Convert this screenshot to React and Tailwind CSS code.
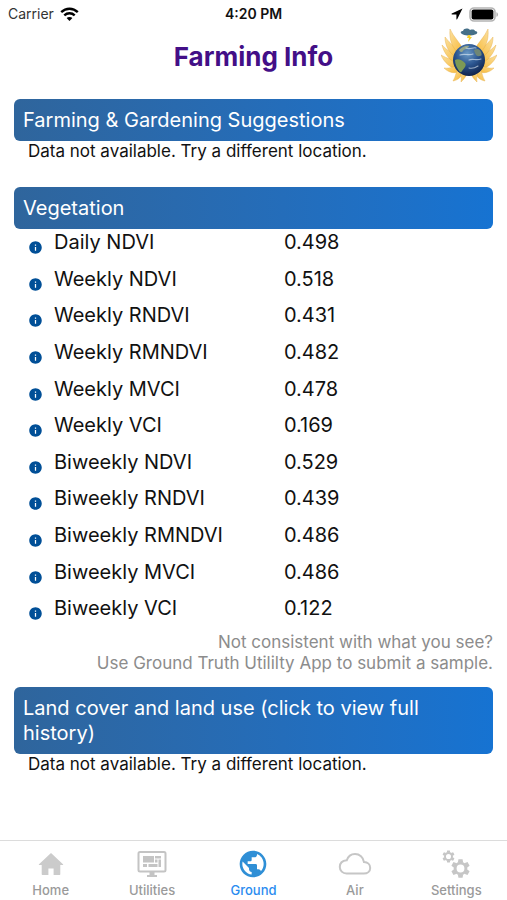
import React from 'react';
import { MdInfo, MdPublic } from 'react-icons/md';

const vegetation = [
    { name: 'Daily NDVI', value: '0.498' },
    { name: 'Weekly NDVI', value: '0.518' },
    { name: 'Weekly RNDVI', value: '0.431' },
    { name: 'Weekly RMNDVI', value: '0.482' },
    { name: 'Weekly MVCI', value: '0.478' },
    { name: 'Weekly VCI', value: '0.169' },
    { name: 'Biweekly NDVI', value: '0.529' },
    { name: 'Biweekly RNDVI', value: '0.439' },
    { name: 'Biweekly RMNDVI', value: '0.486' },
    { name: 'Biweekly MVCI', value: '0.486' },
    { name: 'Biweekly VCI', value: '0.122' },
];

const WifiIcon = () => (
    <svg width="19" height="14" viewBox="0 0 19 14" fill="none" stroke="#000" strokeWidth="2.4">
        <path d="M1.2 5.2C6 .6 13 .6 17.8 5.2" />
        <path d="M4.3 8.3c3-2.8 7.4-2.8 10.4 0" />
        <path d="M9.5 14l-2.9-3c1.6-1.5 4.2-1.5 5.8 0z" fill="#000" stroke="none" />
    </svg>
);

const LocationIcon = () => (
    <svg width="12" height="12" viewBox="0 0 12 12">
        <path d="M11.5.5L.8 5.6c-.5.3-.4.9.2.9h4.4v4.4c0 .6.7.7.9.2z" fill="#000" />
    </svg>
);

const BatteryIcon = () => (
    <svg width="30" height="15" viewBox="0 0 30 15">
        <rect x="1" y="1" width="25" height="13" rx="4" fill="#fff" stroke="#b4b4b4" strokeWidth="1.6" />
        <rect x="2.6" y="2.6" width="21.8" height="9.8" rx="2" fill="#000" />
        <path d="M27.4 5.2c2.2.6 2.2 4 0 4.600z" fill="#b4b4b4" />
    </svg>
);

const Wing = () => (
    <g fill="url(#feather)" stroke="#e3a93c" strokeWidth=".4">
        <path d="M20 42C9 41 3 34 0 27c6 4 13 4 21 8z" />
        <path d="M19 37C8 33 3 25 1 17c5 6 12 8 19 14z" />
        <path d="M19 32C8 26 4 18 4 9c5 7 12 11 17 18z" />
        <path d="M20 28C11 20 8 12 9 1c4 9 10 13 14 22z" />
        <path d="M20 43c-6 3-12 2-17-3 7 1 10-2 15-3z" />
        <path d="M23 42c-2 7-6 10-11 11 3-5 3-9 5-14z" />
        <path d="M26 43c0 5-3 8-6 11 1-5-1-8 0-13z" />
    </g>
);

const Logo = () => (
    <svg width="56" height="54" viewBox="0 0 56 54" role="img" aria-label="Winged globe">
        <defs>
            <linearGradient id="feather" x1="0" y1="0" x2="1" y2="1">
                <stop offset="0" stopColor="#fbe0a0" />
                <stop offset="1" stopColor="#f7b52c" />
            </linearGradient>
            <radialGradient id="ocean" cx=".45" cy=".3" r=".72">
                <stop offset="0" stopColor="#6b9ac6" />
                <stop offset=".5" stopColor="#2b5590" />
                <stop offset="1" stopColor="#0f2148" />
            </radialGradient>
        </defs>
        <Wing />
        <g transform="translate(56 0) scale(-1 1)">
            <Wing />
        </g>
        <circle cx="28" cy="32" r="16" fill="url(#ocean)" />
        <path d="M14 32c3-2 7 0 10 3 2 3-1 5-3 8-1 2-2 1-3 0-2-3-4-7-4-11z" fill="#7d9a55" />
        <path d="M18 22c3-3 7-5 10-4-1 3-5 3-6 5-1 2-3 1-4-1z" fill="#95a58a" />
        <path d="M33 22c3-2 6-1 7 2 1 3 1 4-2 4-2 1-4-2-5-6z" fill="#6f8675" />
        <path d="M19 27c5-2 8 1 13-1M25 20c4 2 7-1 10 0M28 32c4-2 7 1 12-1M28 40c4 1 6 0 9-2" fill="none" stroke="#dce8f2" strokeWidth="1.1" strokeLinecap="round" opacity=".65" />
        <path d="M22 6.5c-3-1-3-3.5 0-3.5 1-3 5-3 7-1 3-1 5 0 5 1 3 0 3 3 0 3.5-3 1.500-9 1.500-12 0z" fill="#456f88" />
        <path d="M27 7h3l-1 2h2l-4 5 1-4h-2z" fill="#f7cf2e" />
    </svg>
);

const HomeIcon = () => (
    <svg width="26" height="24" viewBox="0 0 26 24" fill="#cbcbcb">
        <path d="M13 1l12 11.200c.4.400.2.800-.3.800H22.300v9.300c0 .5-.3.700-.7.700h-6v-6.500h-5.200V23h-6c-.4 0-.7-.2-.7-.7V13H1.300c-.5 0-.7-.4-.3-.8z" />
    </svg>
);

const UtilitiesIcon = () => (
    <svg width="30" height="28" viewBox="0 0 30 28" fill="#c4c4c4">
        <rect x="1.5" y="2" width="27" height="19.5" rx="1.5" fill="none" stroke="#c4c4c4" strokeWidth="2" />
        <path d="M12.5 22h5v3H20v2H10v-2h2.5z" />
        <rect x="6" y="6" width="11" height="6.5" />
        <rect x="18" y="6" width="6" height="2.5" />
        <rect x="18" y="9.5" width="2.5" height="3" />
        <rect x="21.5" y="9.5" width="2.5" height="7.5" />
        <rect x="6" y="14" width="4" height="3" />
        <rect x="11.5" y="14" width="9" height="3" />
    </svg>
);

const CloudIcon = () => (
    <svg width="34" height="24" viewBox="0 0 34 24" fill="none" stroke="#c6c6c6" strokeWidth="2">
        <path d="M8.5 21.5h17.3c3.7 0 6.4-2.4 6.4-5.6 0-3.4-2.6-5.6-6.2-5.8C25.4 5 21.5 2 17 2c-4 0-7 2.5-8.2 6.3C4.7 8.7 1.8 11.2 1.8 14.9c0 3.8 2.9 6.6 6.7 6.6z" />
    </svg>
);

const Gear = ({ cx, cy, scale }) => (
    <g transform={`translate(${cx} ${cy}) scale(${scale})`}>
        <circle r="5.5" fill="none" stroke="#c6c6c6" strokeWidth="3" />
        {[0, 60, 120, 180, 240, 300].map((angle) => (
            <path key={angle} d="M-2.7-6L-2.1-9.5h4.2L2.7-6z" transform={`rotate(${angle})`} fill="#c6c6c6" />
        ))}
    </g>
);

const SettingsIcon = () => (
    <svg width="28" height="28" viewBox="0 0 28 28">
        <Gear cx={6.5} cy={6.5} scale={0.64} />
        <Gear cx={18.5} cy={18.5} scale={0.98} />
    </svg>
);

const tabs = [
    { label: 'Home', icon: <HomeIcon /> },
    { label: 'Utilities', icon: <UtilitiesIcon /> },
    { label: 'Ground', icon: <MdPublic size={32} color="#2f8fd6" />, active: true },
    { label: 'Air', icon: <CloudIcon /> },
    { label: 'Settings', icon: <SettingsIcon /> },
];

const bar = 'w-full rounded-md bg-linear-to-r from-[#2f659c] to-[#1673d2] px-[9px] pt-[9px] pb-2 text-left text-xl leading-[25px] text-white';

const StatusBar = () => (
    <div className="grid h-7 grid-cols-3 items-center px-2 text-sm">
        <div className="flex items-center gap-[6px] text-[#333]">
            Carrier
            <WifiIcon />
        </div>
        <div className="text-center font-semibold">4:20 PM</div>
        <div className="flex items-center justify-end gap-[6px]">
            <LocationIcon />
            <BatteryIcon />
        </div>
    </div>
);

const Header = () => (
    <header className="relative flex h-14 items-center justify-center">
        <h1 className="text-[26px] font-bold text-[#430f87]">Farming Info</h1>
        <div className="absolute top-0 right-[10px]">
            <Logo />
        </div>
    </header>
);

const VegetationTable = () => (
    <table className="h-[403px] w-full table-fixed text-xl leading-[27px]">
        <tbody>
            {vegetation.map((row) => (
                <tr key={row.name} className="align-top">
                    <td className="w-10 pl-[14px]">
                        <button aria-label={`About ${row.name}`} className="mt-[11px] block">
                            <MdInfo size={15} color="#004f97" />
                        </button>
                    </td>
                    <th scope="row" className="w-[48%] text-left font-normal">{row.name}</th>
                    <td>{row.value}</td>
                </tr>
            ))}
        </tbody>
    </table>
);

const TabBar = () => (
    <nav className="grid grid-cols-5 border-t border-[#dcdcdc] pb-px">
        {tabs.map((tab) => (
            <button key={tab.label} className="flex flex-col items-center pt-[6px]">
                <span className="flex h-[34px] items-center">{tab.icon}</span>
                <span className={tab.active ? 'text-[13px] leading-[18px] font-medium text-[#2a8cf0]' : 'text-[13px] leading-[18px] font-medium text-[#9a9a9a]'}>
                    {tab.label}
                </span>
            </button>
        ))}
    </nav>
);

const App = () => {
    return (
        <div className="flex min-h-screen flex-col bg-white font-['Inter',sans-serif] text-[#111]">
            <StatusBar />
            <Header />
            <main className="flex-1 px-[14px] pt-[15px]">
                <section>
                    <h2 className={bar}>Farming &amp; Gardening Suggestions</h2>
                    <p className="pl-[14px] text-[17px] leading-5">Data not available. Try a different location.</p>
                </section>
                <section className="mt-[26px]">
                    <h2 className={bar}>Vegetation</h2>
                    <VegetationTable />
                    <p className="text-right text-[17px] leading-[21px] text-[#8c8c8c]">
                        Not consistent with what you see?
                        <br />
                        Use Ground Truth Utililty App to submit a sample.
                    </p>
                </section>
                <section className="mt-[13px]">
                    <button className={bar}>
                        <span className="block max-w-[400px]">Land cover and land use (click to view full history)</span>
                    </button>
                    <p className="pl-[14px] text-[17px] leading-5">Data not available. Try a different location.</p>
                </section>
            </main>
            <TabBar />
        </div>
    );
};

export default App;
